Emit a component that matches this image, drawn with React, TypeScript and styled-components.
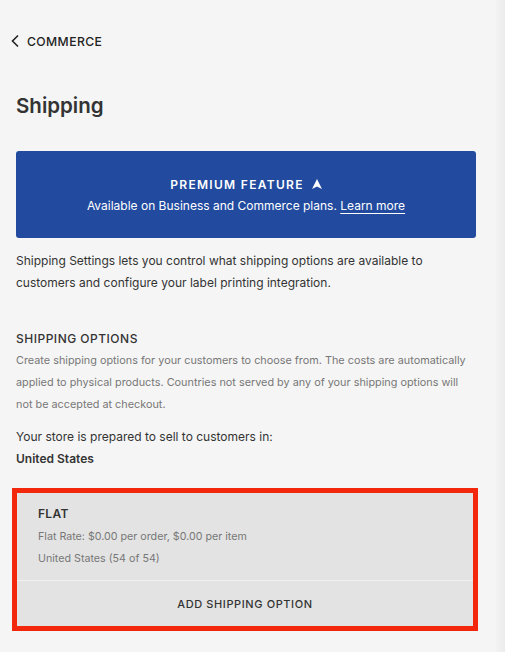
import React from 'react'
import styled, { createGlobalStyle } from 'styled-components'

const GlobalStyle = createGlobalStyle`
  html, body {
    margin: 0;
    padding: 0;
    background: #f5f5f5;
  }
  body {
    font-family: Inter, 'Liberation Sans', Arial, sans-serif;
    color: #333;
    -webkit-font-smoothing: antialiased;
  }
`

const Page = styled.div`
  display: flex;
  width: 505px;
  height: 652px;
  overflow: hidden;
  background: #f5f5f5;
`

const Panel = styled.div`
  flex: 1;
  padding: 32px 20px 0 16px;
  box-sizing: border-box;
`

const Edge = styled.div`
  width: 9px;
  background: linear-gradient(to right, #f3f3f3, #ececec);
`

const BackLink = styled.a`
  display: flex;
  align-items: center;
  gap: 5px;
  margin-left: -6px;
  font-size: 12.2px;
  font-weight: 500;
  letter-spacing: 0.4px;
  color: #222;
  text-decoration: none;
  height: 18px;
`

const Title = styled.h1`
  margin: 44px 0 0;
  font-size: 20.5px;
  font-weight: 600;
  color: #333;
  line-height: 24px;
`

const Banner = styled.div`
  margin-top: 33px;
  height: 87px;
  border-radius: 3px;
  background: #224ba0;
  color: #fff;
  display: flex;
  flex-direction: column;
  align-items: center;
  justify-content: center;
  gap: 6px;
  box-sizing: border-box;
`

const BannerTitle = styled.div`
  display: flex;
  align-items: center;
  gap: 8px;
  font-size: 12px;
  font-weight: 600;
  letter-spacing: 1.3px;
`

const BannerText = styled.div`
  font-size: 12px;
  font-weight: 400;
`

const BannerLink = styled.a`
  color: #fff;
  text-decoration: underline;
  text-underline-offset: 3px;
`

const Intro = styled.p`
  margin: 12px 0 0;
  font-size: 12px;
  line-height: 22px;
  color: #333;
`

const SectionTitle = styled.h2`
  margin: 36px 0 0;
  font-size: 12px;
  font-weight: 500;
  letter-spacing: 0.5px;
  line-height: 18px;
  color: #333;
`

const Hint = styled.p`
  margin: 1px 0 0;
  font-size: 10.85px;
  line-height: 22px;
  color: #777;
`

const Body = styled.p<{ $strong?: boolean }>`
  margin: ${(p) => (p.$strong ? '0' : '11px 0 0')};
  font-size: 12px;
  line-height: 22px;
  font-weight: ${(p) => (p.$strong ? 600 : 400)};
  color: #333;
`

const Highlight = styled.div`
  margin: 18px -2px 0 -4px;
  border: 5px solid #f2270c;
`

const Card = styled.div`
  background: #e3e3e3;
`

const Option = styled.div`
  padding: 13px 21px 10px;
  border-bottom: 1px solid #f0f0f0;
`

const OptionName = styled.div`
  font-size: 12px;
  font-weight: 600;
  letter-spacing: 0.3px;
  line-height: 16px;
  color: #333;
  margin-bottom: 4px;
`

const OptionMeta = styled.div`
  font-size: 10.7px;
  line-height: 22px;
  color: #777;
`

const AddButton = styled.button`
  display: block;
  width: 100%;
  height: 45px;
  border: 0;
  background: transparent;
  font-family: inherit;
  font-size: 11px;
  font-weight: 500;
  letter-spacing: 0.6px;
  color: #333;
  cursor: pointer;
`

const App = () => {
  return (
    <Page>
      <GlobalStyle />
      <Panel>
        <BackLink href="#">
          <svg width="12" height="14" viewBox="0 0 12 14" fill="none">
            <path d="M8 1.5 L2.5 7 L8 12.5" stroke="#222" strokeWidth="1.6" />
          </svg>
          COMMERCE
        </BackLink>

        <Title>Shipping</Title>

        <Banner>
          <BannerTitle>
            PREMIUM FEATURE
            <svg width="10" height="10" viewBox="0 0 10 10">
              <path d="M5 0 L10 10 L5 7.6 L0 10 Z" fill="#fff" />
            </svg>
          </BannerTitle>
          <BannerText>
            Available on Business and Commerce plans.{' '}
            <BannerLink href="#">Learn more</BannerLink>
          </BannerText>
        </Banner>

        <Intro>
          Shipping Settings lets you control what shipping options are available to
          customers and configure your label printing integration.
        </Intro>

        <SectionTitle>SHIPPING OPTIONS</SectionTitle>
        <Hint>
          Create shipping options for your customers to choose from. The costs are automatically
          applied to physical products. Countries not served by any of your shipping options will
          not be accepted at checkout.
        </Hint>

        <Body>Your store is prepared to sell to customers in:</Body>
        <Body $strong>United States</Body>

        <Highlight>
          <Card>
            <Option>
              <OptionName>FLAT</OptionName>
              <OptionMeta>Flat Rate: $0.00 per order, $0.00 per item</OptionMeta>
              <OptionMeta>United States (54 of 54)</OptionMeta>
            </Option>
            <AddButton>ADD SHIPPING OPTION</AddButton>
          </Card>
        </Highlight>
      </Panel>
      <Edge />
    </Page>
  )
}

export default App
